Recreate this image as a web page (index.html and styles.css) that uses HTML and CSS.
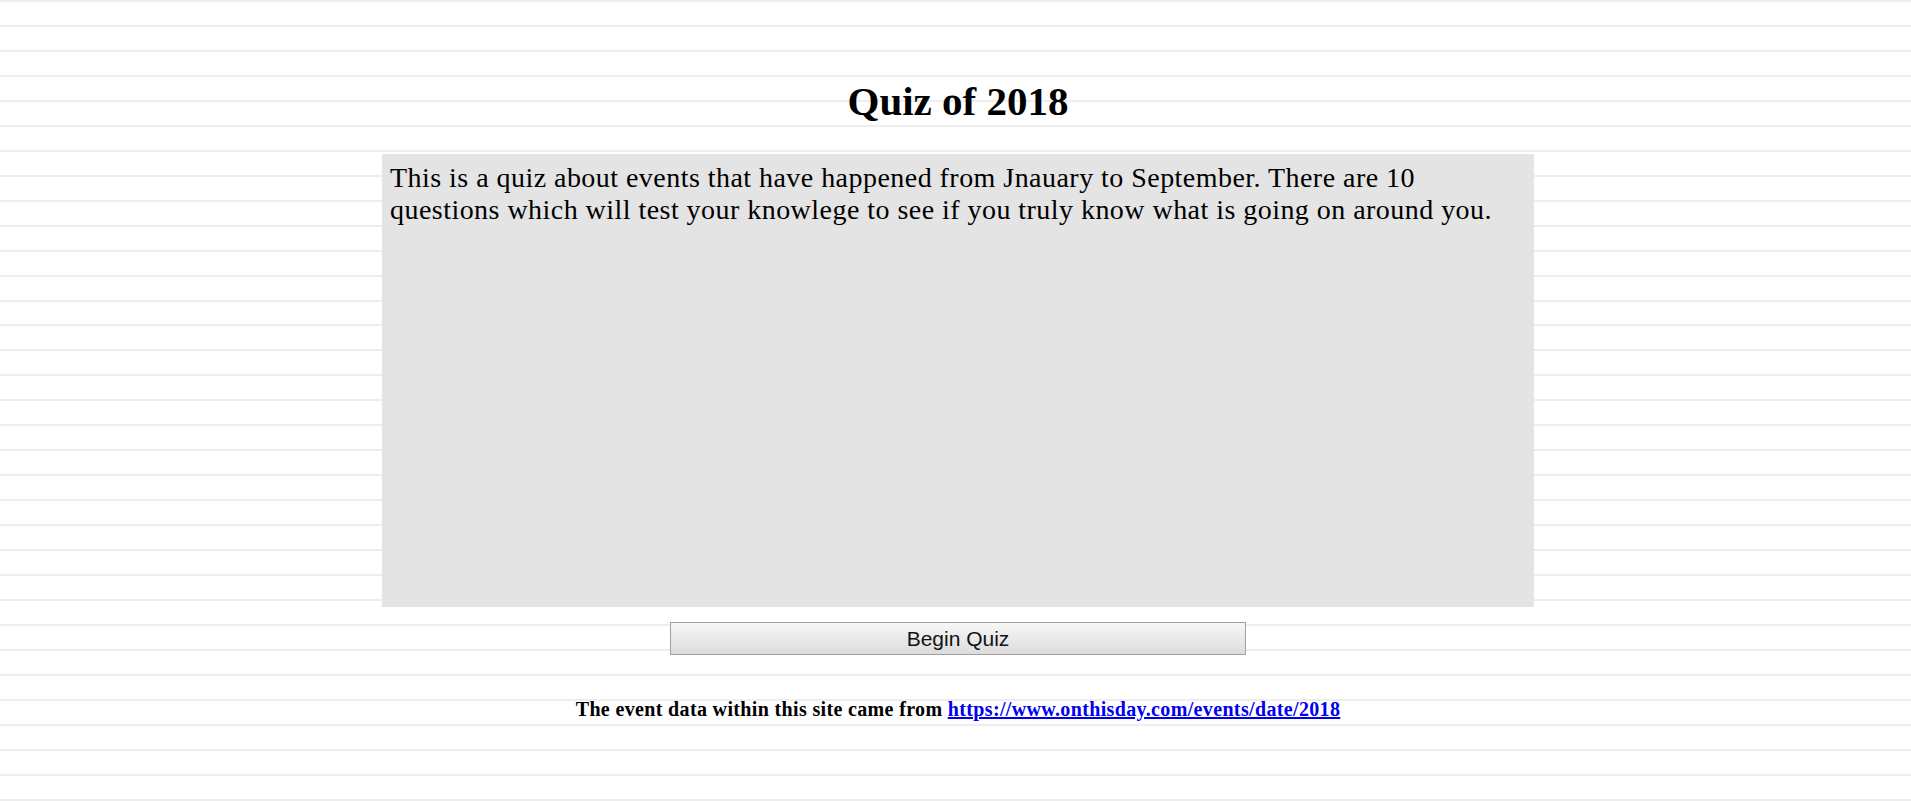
FILE: index.html
```html
<!DOCTYPE html>
<html lang="en">
<head>
<meta charset="utf-8">
<title>Quiz of 2018</title>
<link rel="stylesheet" href="styles.css">
</head>
<body>
<main class="page">
  <h1 class="title">Quiz of 2018</h1>
  <div class="intro">This is a quiz about events that have happened from Jnauary to September. There are 10 questions which will test your knowlege to see if you truly know what is going on around you.</div>
  <button class="begin" type="button">Begin Quiz</button>
  <p class="credit">The event data within this site came from <a href="#">https://www.onthisday.com/events/date/2018</a></p>
</main>
</body>
</html>
```

FILE: styles.css
```css
html, body {
  margin: 0;
  padding: 0;
}

body {
  min-height: 802px;
  background-color: #ffffff;
  background-image: repeating-linear-gradient(to bottom, #eeeeee 0px, #eeeeee 2px, #ffffff 2px, #ffffff 24.96px);
  font-family: "Liberation Serif", "Times New Roman", serif;
  color: #000;
}

.page {
  display: flex;
  flex-direction: column;
  align-items: center;
  padding-left: 5px;
  padding-top: 78px;
}

.title {
  margin: 0;
  font-size: 41px;
  font-weight: bold;
  line-height: 47px;
}

.intro {
  box-sizing: border-box;
  margin-top: 29px;
  width: 1152px;
  height: 453px;
  padding: 8px 8px;
  background: #e4e4e4;
  font-size: 28px;
  line-height: 32px;
  letter-spacing: 0.46px;
}

.begin {
  margin-top: 15px;
  width: 576px;
  height: 33px;
  padding: 0;
  border: 1px solid #a0a0a0;
  border-radius: 0;
  background: linear-gradient(to bottom, #f7f7f7, #dcdcdc);
  font-family: "Liberation Sans", Arial, sans-serif;
  font-size: 21px;
  color: #111;
}

.credit {
  margin: 43px 0 0;
  font-size: 20px;
  font-weight: bold;
  line-height: 23px;
  letter-spacing: 0.35px;
}

.credit a {
  color: #0000ee;
  text-decoration: underline;
}
```
